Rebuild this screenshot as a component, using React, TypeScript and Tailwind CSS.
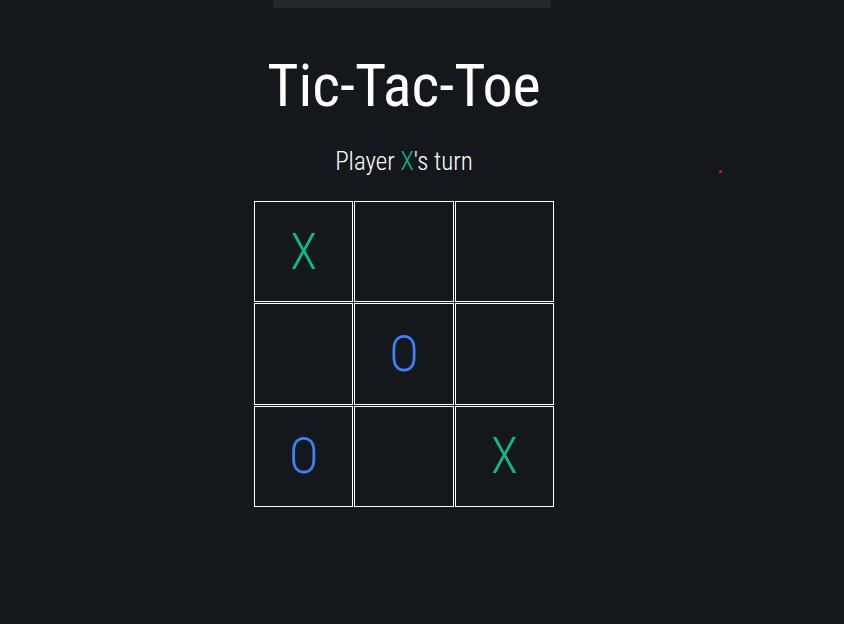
import React from "react";

const board: (string | null)[] = ["X", null, null, null, "O", null, "O", null, "X"];

export default function App() {
  return (
    <div
      className="relative min-h-[624px] w-full bg-[#14181c] text-white"
      style={{ fontFamily: "Roboto, 'Liberation Sans', sans-serif" }}
    >
      <div className="flex w-[808px] flex-col items-center">
        <div className="ml-[16px] h-[8px] w-[278px] bg-[#23262b]" />
        <h1 className="mt-[48px] text-[60px] font-normal leading-none font-stretch-condensed">Tic-Tac-Toe</h1>
        <p className="mt-[33px] text-[25px] font-light leading-none font-stretch-condensed">
          Player <span className="text-[#10b981]">X</span>'s turn
        </p>
        <div className="mt-[27px] grid w-[300px] grid-cols-3 gap-[1px]">
          {board.map((v, i) => (
            <div
              key={i}
              className={`flex h-[101.33px] items-center justify-center border border-white text-[50px] font-light leading-none font-stretch-condensed ${
                v === "X" ? "text-[#10b981]" : "text-[#3b82f6]"
              }`}
            >
              {v}
            </div>
          ))}
        </div>
      </div>
      <div className="absolute left-[719px] top-[170px] h-[3px] w-[3px] rounded-full bg-[#e0142a]" />
    </div>
  );
}
